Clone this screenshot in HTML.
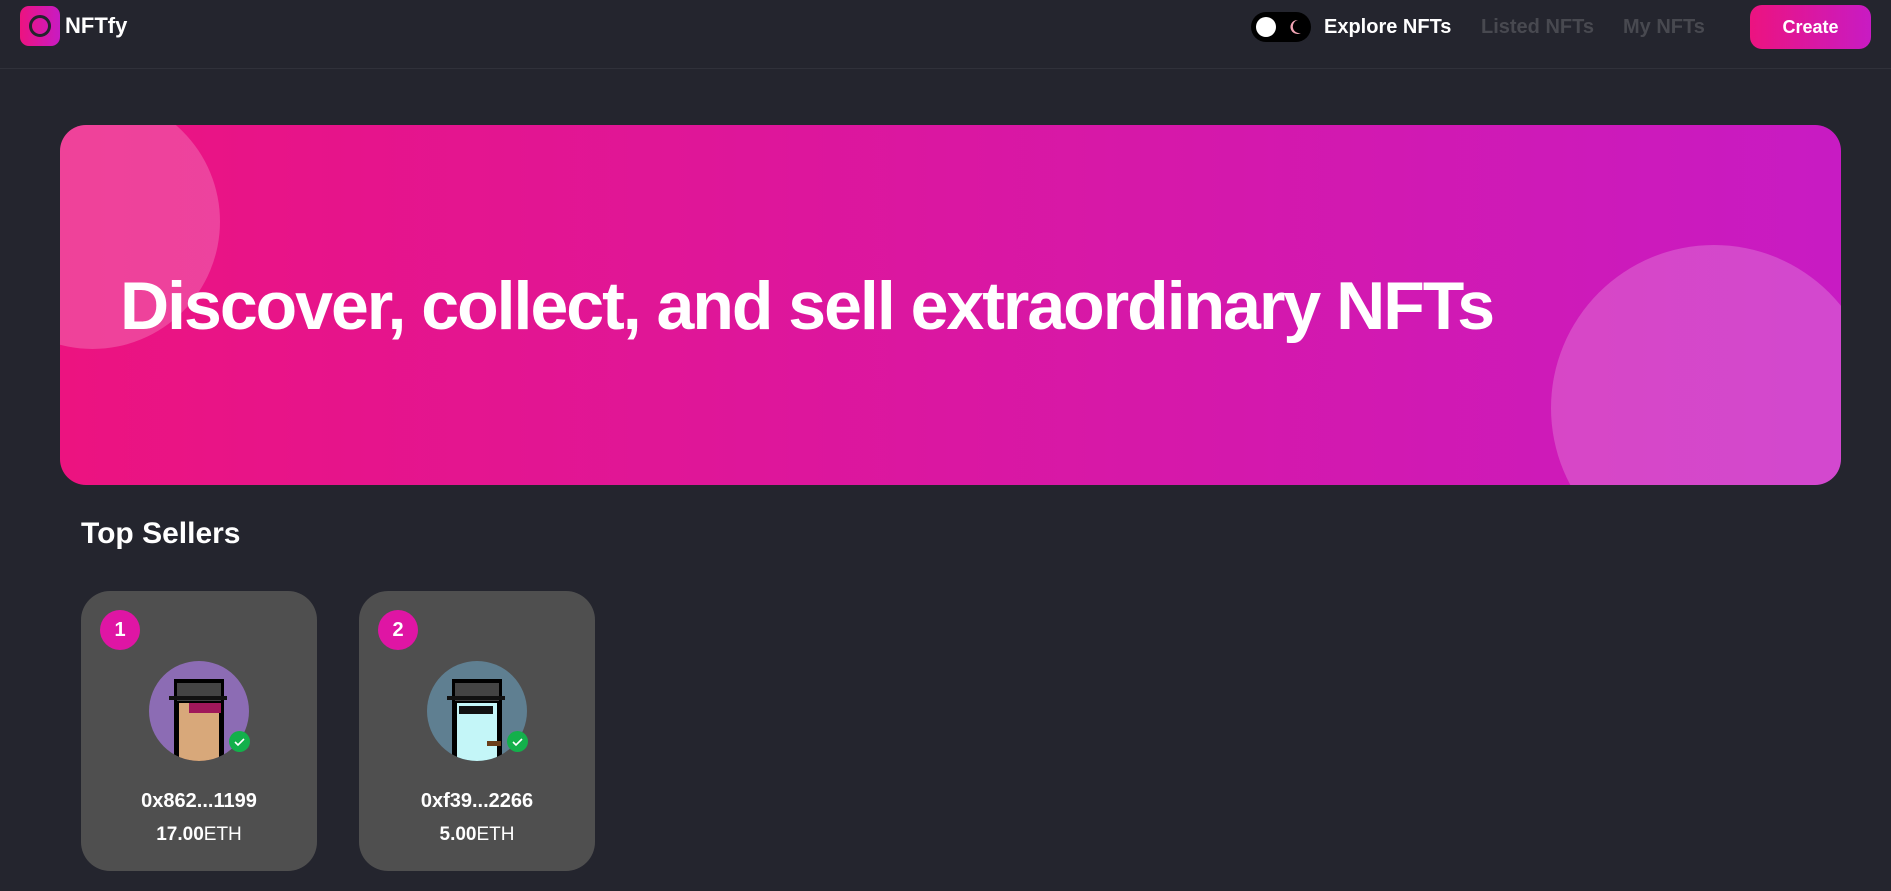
<!DOCTYPE html>
<html><head><meta charset="utf-8"><style>
*{margin:0;padding:0;box-sizing:border-box}
body{width:1891px;height:891px;background:#24252e;font-family:"Liberation Sans",sans-serif;color:#fff;overflow:hidden;position:relative}
.hdr{position:absolute;left:0;top:0;width:1891px;height:69px;border-bottom:1px solid #30313a}
.logo{position:absolute;left:20px;top:6px;width:40px;height:40px;border-radius:9px;background:linear-gradient(90deg,#ec1380,#c81bc3)}
.logo:after{content:"";position:absolute;left:9px;top:9px;width:22px;height:22px;border:3px solid #23242c;border-radius:50%;box-sizing:border-box}
.brand{position:absolute;left:65px;top:13px;font-size:22px;font-weight:bold}
.tog{position:absolute;left:1251px;top:12px;width:60px;height:30px;border-radius:15px;background:#000}
.tog .k{position:absolute;left:5px;top:5px;width:20px;height:20px;border-radius:50%;background:#fff}
.nav{position:absolute;top:16px;font-size:20px;font-weight:bold}
.create{position:absolute;left:1750px;top:5px;width:121px;height:44px;border-radius:12px;background:linear-gradient(90deg,#ec1380,#c81bc3);font-size:18px;font-weight:bold;text-align:center;line-height:44px}
.banner{position:absolute;left:60px;top:125px;width:1781px;height:360px;border-radius:26px;background:linear-gradient(90deg,#ec1380,#c81bc3);overflow:hidden}
.c1{position:absolute;left:-95px;top:-31px;width:255px;height:255px;border-radius:50%;background:rgba(255,255,255,.2)}
.c2{position:absolute;left:1491px;top:120px;width:326px;height:326px;border-radius:50%;background:rgba(255,255,255,.2)}
.banner h1{position:absolute;left:60px;top:142px;font-size:68px;font-weight:bold;letter-spacing:-2px;white-space:nowrap}
.ts{position:absolute;left:81px;top:517px;font-size:30px;font-weight:bold}
.card{position:absolute;top:591px;width:236px;height:280px;border-radius:29px;background:#4f4f4f}
.badge{position:absolute;left:19px;top:19px;width:40px;height:40px;border-radius:50%;background:#df15a4;font-weight:bold;font-size:20px;text-align:center;line-height:40px}
.av{position:absolute;left:68px;top:70px;width:100px;height:100px;border-radius:50%;overflow:hidden}
.chk{position:absolute;left:148px;top:140px;width:21px;height:21px;border-radius:50%;background:#13b04b}
.nm{position:absolute;left:0;width:236px;text-align:center;top:199px;font-size:20px;font-weight:bold}
.eth{position:absolute;left:0;width:236px;text-align:center;top:233px;font-size:19px;font-weight:bold}
.eth span{font-weight:normal}
</style></head><body>
<div class="hdr">
<div class="logo"></div><div class="brand">NFTfy</div>
<div class="tog"><div class="k"></div>
<svg style="position:absolute;left:38px;top:7px" width="14" height="16" viewBox="0 0 14 16"><path d="M9 1A7 7 0 1 0 12 14A5.5 5.5 0 1 1 9 1Z" fill="#f3a5b5"/></svg></div>
<div class="nav" style="left:1324px;color:#fff">Explore NFTs</div>
<div class="nav" style="left:1481px;color:#484950">Listed NFTs</div>
<div class="nav" style="left:1623px;color:#484950">My NFTs</div>
<div class="create">Create</div>
</div>
<div class="banner"><div class="c1"></div><div class="c2"></div><h1>Discover, collect, and sell extraordinary NFTs</h1></div>
<div class="ts">Top Sellers</div>
<div class="card" style="left:81px"><div class="badge">1</div>
<div class="av" style="background:#8c6cb4"><svg width="100" height="100" viewBox="0 0 100 100">
<rect x="25" y="18" width="50" height="82" fill="#000"/><rect x="28" y="22" width="44" height="18" fill="#444"/><rect x="30" y="42" width="40" height="60" fill="#d8a87a"/><rect x="40" y="42" width="32" height="10" fill="#a0185a"/><rect x="20" y="35" width="58" height="4" fill="#111"/></svg></div>
<div class="chk"><svg width="21" height="21"><path d="M6 11l3 3 6-6" stroke="#fff" stroke-width="1.6" fill="none"/></svg></div>
<div class="nm">0x862...1199</div><div class="eth">17.00<span>ETH</span></div></div>
<div class="card" style="left:359px"><div class="badge">2</div>
<div class="av" style="background:#5f7f91"><svg width="100" height="100" viewBox="0 0 100 100">
<rect x="25" y="18" width="50" height="82" fill="#000"/><rect x="28" y="22" width="44" height="18" fill="#444"/><rect x="30" y="42" width="40" height="60" fill="#c4f6f8"/><rect x="32" y="45" width="34" height="8" fill="#111"/><rect x="20" y="35" width="58" height="4" fill="#111"/><rect x="60" y="80" width="14" height="5" fill="#6a3e1a"/></svg></div>
<div class="chk"><svg width="21" height="21"><path d="M6 11l3 3 6-6" stroke="#fff" stroke-width="1.6" fill="none"/></svg></div>
<div class="nm">0xf39...2266</div><div class="eth">5.00<span>ETH</span></div></div>
</body></html>
